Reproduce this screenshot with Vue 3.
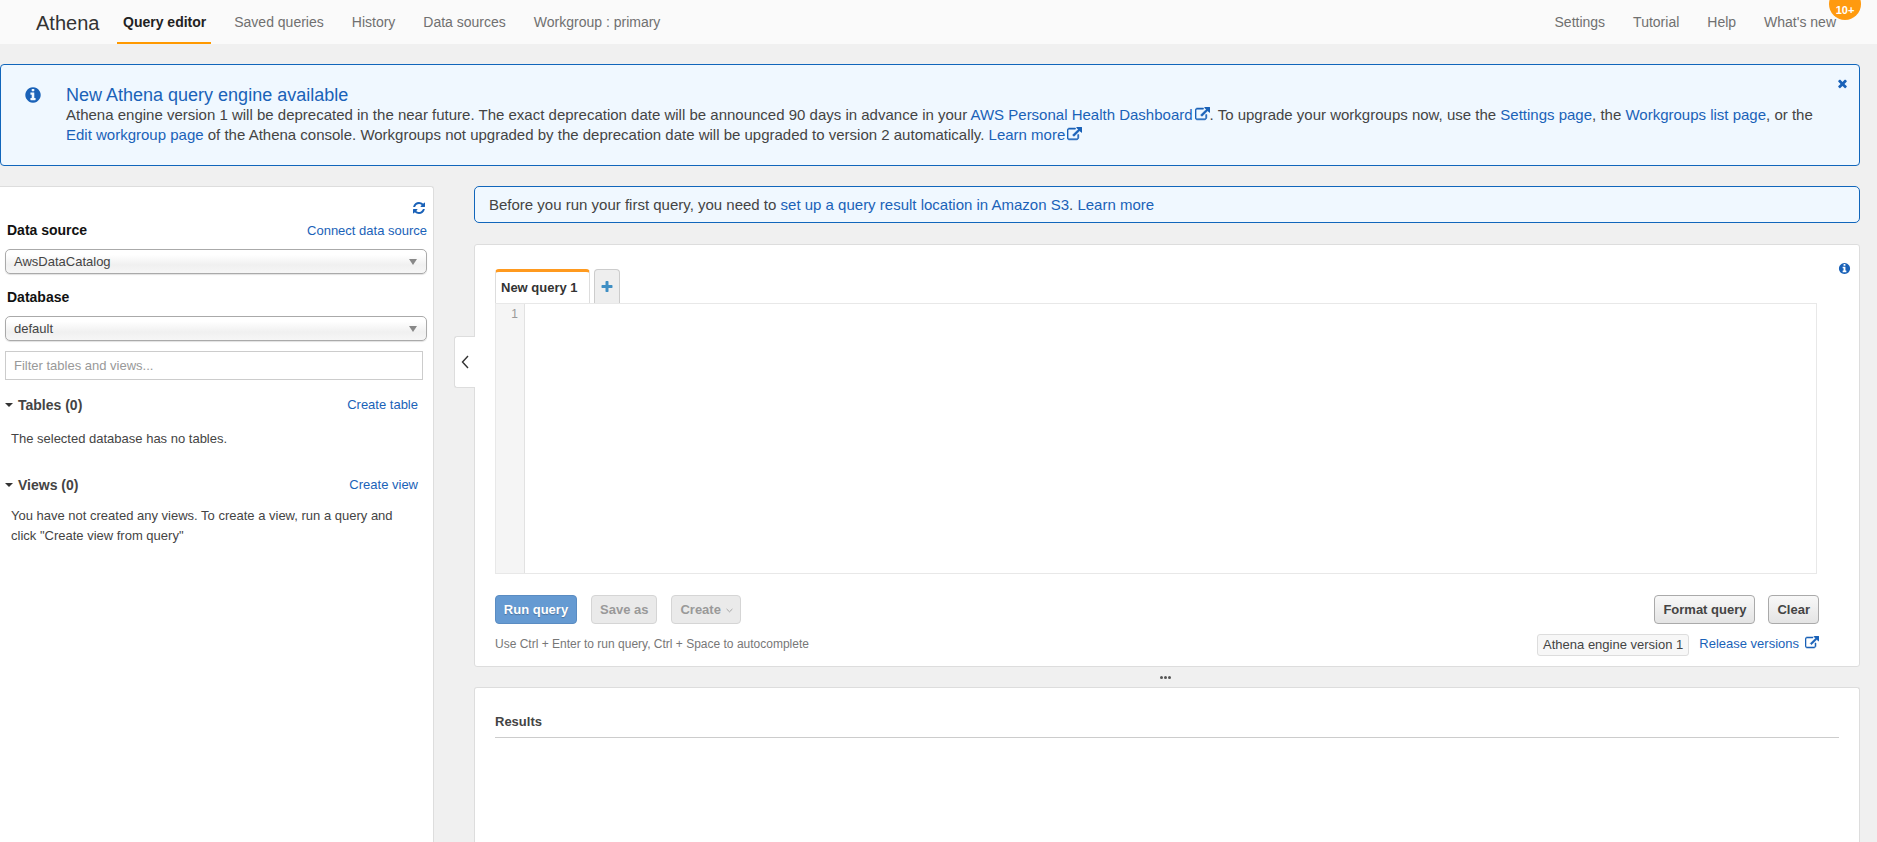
<script setup>
const icons = {
  info: 'M1152 1376v-160q0-14-9-23t-23-9h-96v-512q0-14-9-23t-23-9h-320q-14 0-23 9t-9 23v160q0 14 9 23t23 9h96v320h-96q-14 0-23 9t-9 23v160q0 14 9 23t23 9h448q14 0 23-9t9-23zm-128-896v-160q0-14-9-23t-23-9h-192q-14 0-23 9t-9 23v160q0 14 9 23t23 9h192q14 0 23-9t9-23zm640 416q0 209-103 385.5t-279.5 279.5-385.5 103-385.5-103-279.5-279.5-103-385.5 103-385.5 279.5-279.5 385.5-103 385.5 103 279.5 279.5 103 385.5z',
  ext: 'M1408 928v320q0 119-84.5 203.5t-203.5 84.5h-832q-119 0-203.5-84.5t-84.5-203.5v-832q0-119 84.5-203.5t203.5-84.5h704q14 0 23 9t9 23v64q0 14-9 23t-23 9h-704q-66 0-113 47t-47 113v832q0 66 47 113t113 47h832q66 0 113-47t47-113v-320q0-14 9-23t23-9h64q14 0 23 9t9 23zm384-864v512q0 26-19 45t-45 19-45-19l-176-176-652 652q-10 10-23 10t-23-10l-114-114q-10-10-10-23t10-23l652-652-176-176q-19-19-19-45t19-45 45-19h512q26 0 45 19t19 45z',
  refresh: 'M1639 1056q0 5-1 7-64 268-268 434.5t-478 166.5q-146 0-282.5-55t-243.5-157l-129 129q-19 19-45 19t-45-19-19-45v-448q0-26 19-45t45-19h448q26 0 45 19t19 45-19 45l-137 137q71 66 161 102t187 36q134 0 250-65t186-179q11-17 53-117 8-23 30-23h192q13 0 22.5 9.5t9.5 22.5zm25-800v448q0 26-19 45t-45 19h-448q-26 0-45-19t-19-45 19-45l138-138q-148-137-349-137-134 0-250 65t-186 179q-11 17-53 117-8 23-30 23h-199q-13 0-22.5-9.5t-9.5-22.5v-7q65-268 270-434.5t480-166.5q146 0 284 55.5t245 156.5l130-129q19-19 45-19t45 19 19 45z',
  times: 'M1490 1322q0 40-28 68l-136 136q-28 28-68 28t-68-28l-294-294-294 294q-28 28-68 28t-68-28l-136-136q-28-28-28-68t28-68l294-294-294-294q-28-28-28-68t28-68l136-136q28-28 68-28t68 28l294 294 294-294q28-28 68-28t68 28l136 136q28 28 28 68t-28 68l-294 294 294 294q28 28 28 68z',
  plus: 'M1600 736v192q0 40-28 68t-68 28h-416v416q0 40-28 68t-68 28h-192q-40 0-68-28t-28-68v-416h-416q-40 0-68-28t-28-68v-192q0-40 28-68t68-28h416v-416q0-40 28-68t68-28h192q40 0 68 28t28 68v416h416q40 0 68 28t28 68z'
}
const leftNav = ['Saved queries', 'History', 'Data sources', 'Workgroup : primary']
const rightNav = ['Settings', 'Tutorial', 'Help']
</script>

<template>
  <div class="page">
    <header class="nav">
      <span class="brand">Athena</span>
      <a class="nav-item active">Query editor</a>
      <a v-for="item in leftNav" :key="item" class="nav-item">{{ item }}</a>
      <span class="spacer"></span>
      <a v-for="item in rightNav" :key="item" class="nav-item">{{ item }}</a>
      <a class="nav-item whats-new">What's new<span class="badge">10+</span></a>
    </header>

    <section class="banner">
      <svg class="banner-info" viewBox="0 0 1792 1792"><path :d="icons.info" /></svg>
      <div class="banner-body">
        <h2 class="banner-title">New Athena query engine available</h2>
        <p class="banner-text">Athena engine version 1 will be deprecated in the near future. The exact deprecation date will be announced 90 days in advance in your <a>AWS Personal Health Dashboard<svg class="ext" viewBox="0 0 1792 1792"><path :d="icons.ext" /></svg></a>. To upgrade your workgroups now, use the <a>Settings page</a>, the <a>Workgroups list page</a>, or the <a>Edit workgroup page</a> of the Athena console. Workgroups not upgraded by the deprecation date will be upgraded to version 2 automatically. <a>Learn more<svg class="ext" viewBox="0 0 1792 1792"><path :d="icons.ext" /></svg></a></p>
      </div>
      <svg class="banner-close" viewBox="0 0 1792 1792"><path :d="icons.times" /></svg>
    </section>

    <div class="content">
      <aside class="side">
        <div class="refresh-row">
          <svg class="refresh" viewBox="0 0 1792 1792"><path :d="icons.refresh" /></svg>
        </div>
        <div class="label-row">
          <span class="label">Data source</span>
          <a class="link">Connect data source</a>
        </div>
        <div class="select"><span>AwsDataCatalog</span><i class="select-arrow"></i></div>
        <div class="label-row second">
          <span class="label">Database</span>
        </div>
        <div class="select"><span>default</span><i class="select-arrow"></i></div>
        <input class="filter" type="text" placeholder="Filter tables and views..." />
        <div class="group-row tables">
          <span class="group-title"><i class="caret"></i>Tables (0)</span>
          <a class="link">Create table</a>
        </div>
        <p class="side-text one">The selected database has no tables.</p>
        <div class="group-row views">
          <span class="group-title"><i class="caret"></i>Views (0)</span>
          <a class="link">Create view</a>
        </div>
        <p class="side-text two">You have not created any views. To create a view, run a query and click "Create view from query"</p>
      </aside>

      <main class="main">
        <div class="collapse">
          <svg viewBox="0 0 8 14" width="8" height="14"><path d="M7 1 1.5 7 7 13" fill="none" stroke="#333" stroke-width="1.4" /></svg>
        </div>
        <div class="notice">Before you run your first query, you need to <a>set up a query result location in Amazon S3</a>. <a>Learn more</a></div>

        <section class="card editor-card">
          <svg class="card-info" viewBox="0 0 1792 1792"><path :d="icons.info" /></svg>
          <div class="tabs">
            <div class="tab">New query 1</div>
            <div class="tab-add"><svg viewBox="0 0 1792 1792"><path :d="icons.plus" /></svg></div>
          </div>
          <div class="editor">
            <div class="gutter">1</div>
          </div>
          <div class="actions">
            <button class="btn primary">Run query</button>
            <button class="btn disabled">Save as</button>
            <button class="btn disabled create">Create <svg viewBox="0 0 8 5" width="7" height="5"><path d="M.7.8 4 4l3.3-3.2" fill="none" stroke="#999" stroke-width="1" /></svg></button>
            <span class="spacer"></span>
            <button class="btn">Format query</button>
            <button class="btn">Clear</button>
          </div>
          <div class="footer-row">
            <span class="hint">Use Ctrl + Enter to run query, Ctrl + Space to autocomplete</span>
            <span class="spacer"></span>
            <span class="engine">Athena engine version 1</span>
            <a class="link release">Release versions<svg class="ext" viewBox="0 0 1792 1792"><path :d="icons.ext" /></svg></a>
          </div>
        </section>

        <div class="handle"><i></i><i></i><i></i></div>

        <section class="card results-card">
          <h3 class="results-title">Results</h3>
        </section>
      </main>
    </div>
  </div>
</template>

<style>
html, body { margin: 0; background: #f0f0f0; overflow: hidden; }
</style>

<style scoped>
.page {
  height: 842px;
  overflow: hidden;
  background: #f0f0f0;
  font-family: "Liberation Sans", Arial, sans-serif;
  font-size: 13px;
  color: #444;
  display: flex;
  flex-direction: column;
}
a { color: #1a62b8; text-decoration: none; }
p, h2, h3 { margin: 0; }
.spacer { flex: 1; }

.nav {
  height: 44px;
  flex: none;
  background: #fafafa;
  display: flex;
  align-items: stretch;
  padding: 0 34px 0 36px;
  box-sizing: border-box;
  overflow: hidden;
}
.brand { font-size: 20px; color: #333; line-height: 46px; width: 81px; }
.nav-item {
  color: #707070;
  font-size: 14px;
  line-height: 44px;
  margin-right: 28px;
  position: relative;
}
.nav-item.active {
  color: #222;
  font-weight: 700;
  padding: 0 5px 0 6px;
  margin-right: 23px;
  border-bottom: 2px solid #f90;
  height: 42px;
  line-height: 44px;
}
.whats-new { margin-right: 7px; }
.badge {
  position: absolute;
  left: 65px;
  top: -12px;
  width: 32px;
  height: 32px;
  border-radius: 50%;
  background: #ff9a0f;
  color: #fff;
  font-size: 11px;
  font-weight: 700;
  line-height: 44px;
  text-align: center;
}

.banner {
  margin: 20px 17px 0 0;
  height: 102px;
  flex: none;
  box-sizing: border-box;
  background: #f0f8ff;
  border: 1px solid #1166bb;
  border-radius: 4px;
  display: flex;
  padding: 20px 10px 0 23px;
}
.banner-info { width: 18px; height: 18px; fill: #1a62b8; margin: 1px 24px 0 0; flex: none; }
.banner-body { flex: 1; padding-right: 6px; }
.banner-title { font-size: 18px; font-weight: 400; color: #1a62b8; line-height: 20px; }
.banner-text { font-size: 15px; line-height: 20px; color: #444; }
.banner-close { width: 13px; height: 13px; fill: #1a62b8; margin-top: -8px; flex: none; }
.ext { width: 15px; height: 15px; fill: #1a62b8; stroke: #1a62b8; stroke-width: 70; vertical-align: -2px; margin-left: 2px; }

.content { flex: 1; display: flex; min-height: 0; margin-top: 20px; }

.side {
  width: 434px;
  flex: none;
  box-sizing: border-box;
  background: #fff;
  border: 1px solid #ddd;
  border-left: 0;
  border-bottom: 0;
  border-top-right-radius: 3px;
  padding: 14px 6px 0 5px;
}
.refresh-row { display: flex; justify-content: flex-end; padding-right: 1px; height: 16px; }
.refresh { width: 14px; height: 14px; fill: #1a62b8; }
.label-row { display: flex; justify-content: space-between; align-items: center; height: 20px; margin-top: 3px; padding-left: 2px; }
.label-row.second { margin-top: 13px; }
.label { font-size: 14px; font-weight: 700; color: #111; }
.link { font-size: 13px; color: #1a62b8; }
.select {
  height: 25px;
  margin-top: 9px;
  box-sizing: border-box;
  border: 1px solid #aaa;
  border-radius: 5px;
  background: linear-gradient(#fff 20%, #f0f0f0 65%, #f6f6f6);
  box-shadow: 0 1px 1px rgba(0,0,0,.12);
  display: flex;
  align-items: center;
  justify-content: space-between;
  padding: 0 9px 0 8px;
  color: #444;
}
.select-arrow { width: 0; height: 0; border: 4px solid transparent; border-top: 6px solid #888; border-bottom: 0; }
.filter {
  display: block;
  width: 418px;
  height: 29px;
  margin-top: 10px;
  box-sizing: border-box;
  border: 1px solid #ccc;
  padding: 0 8px;
  font: 13px "Liberation Sans", Arial, sans-serif;
  outline: 0;
}
.filter::placeholder { color: #999; opacity: 1; }
.group-row { display: flex; justify-content: space-between; align-items: center; padding-right: 9px; height: 20px; }
.group-row .link { margin-top: -2px; }
.group-row.tables { margin-top: 15px; }
.group-row.views { margin-top: 26px; }
.group-title { font-size: 14px; font-weight: 700; color: #444; display: flex; align-items: center; }
.caret { width: 0; height: 0; border: 4px solid transparent; border-top: 4px solid #333; border-bottom: 0; margin-right: 5px; }
.side-text { margin-left: 6px; line-height: 20px; color: #444; width: 395px; }
.side-text.one { margin-top: 14px; }
.side-text.two { margin-top: 11px; }

.main { flex: 1; min-width: 0; margin: 0 17px 0 40px; position: relative; display: flex; flex-direction: column; }
.collapse {
  position: absolute;
  z-index: 1;
  left: -20px;
  top: 150px;
  width: 21px;
  height: 52px;
  box-sizing: border-box;
  background: #fff;
  border: 1px solid #ddd;
  border-right: 0;
  border-radius: 3px 0 0 3px;
  display: flex;
  align-items: center;
  justify-content: center;
}
.notice {
  height: 37px;
  box-sizing: border-box;
  background: #f0f8ff;
  border: 1px solid #1166bb;
  border-radius: 5px;
  padding: 0 14px;
  font-size: 15px;
  line-height: 35px;
  color: #444;
}
.card { background: #fff; border: 1px solid #ddd; border-radius: 3px; box-sizing: border-box; position: relative; }
.editor-card { height: 423px; margin-top: 21px; padding: 24px 42px 0 20px; }
.card-info { position: absolute; right: 8px; top: 17px; width: 13px; height: 13px; fill: #1a62b8; }
.tabs { display: flex; gap: 4px; height: 34px; }
.tab {
  width: 95px;
  box-sizing: border-box;
  border: 1px solid #ddd;
  border-top: 3px solid #ff9a1f;
  border-bottom: 0;
  border-radius: 4px 4px 0 0;
  padding-left: 5px;
  font-weight: 700;
  color: #333;
  line-height: 32px;
}
.tab-add {
  width: 26px;
  box-sizing: border-box;
  background: #eee;
  border: 1px solid #ccc;
  border-bottom: 0;
  border-radius: 4px 4px 0 0;
  display: flex;
  align-items: center;
  justify-content: center;
}
.tab-add svg { width: 14px; height: 14px; fill: #3f8fc4; }
.editor { height: 271px; box-sizing: border-box; border: 1px solid #e8e8e8; display: flex; }
.gutter {
  width: 29px;
  box-sizing: border-box;
  background: #f5f5f5;
  border-right: 1px solid #e2e2e2;
  padding: 3px 6px 0 0;
  text-align: right;
  color: #999;
  font-size: 12px;
  line-height: 14px;
}
.actions { display: flex; align-items: stretch; height: 29px; margin-top: 21px; gap: 14px; margin-right: -2px; }
.actions .btn:last-child { margin-left: -1px; }
.btn {
  box-sizing: border-box;
  height: 29px;
  padding: 0 8px;
  border: 1px solid #aaa;
  border-radius: 4px;
  background: linear-gradient(#f8f8f8, #e4e4e4);
  font: 700 13px "Liberation Sans", Arial, sans-serif;
  color: #444;
}
.btn.primary { width: 82px; padding: 0; background: #659ad2; border-color: #5a8cc2; color: #fff; text-shadow: 0 1px 1px rgba(0,0,0,.25); }
.btn.disabled { background: #eaeaea; border-color: #d5d5d5; color: #999; }
.btn.create { padding-right: 7px; }
.btn.create svg { vertical-align: 1px; margin-left: 1px; }
.footer-row { display: flex; align-items: center; height: 22px; margin-top: 10px; margin-right: -2px; }
.hint { font-size: 12px; color: #777; margin-bottom: 3px; }
.engine { border: 1px solid #ddd; border-radius: 3px; background: #f7f7f7; padding: 0 5px; line-height: 20px; color: #444; font-size: 13px; }
.release { margin-left: 10px; margin-bottom: 3px; }
.release .ext { width: 14px; height: 14px; margin-left: 6px; }
.handle { height: 20px; flex: none; display: flex; align-items: center; justify-content: center; gap: 1px; padding-right: 4px; }
.handle i { width: 3px; height: 3px; border-radius: 50%; background: #555; }
.results-card { flex: 1; border-bottom: 0; padding: 26px 20px 0 20px; border-radius: 3px 3px 0 0; }
.results-title { font-size: 13px; font-weight: 700; color: #444; height: 23px; line-height: 16px; border-bottom: 1px solid #ccc; }
</style>
